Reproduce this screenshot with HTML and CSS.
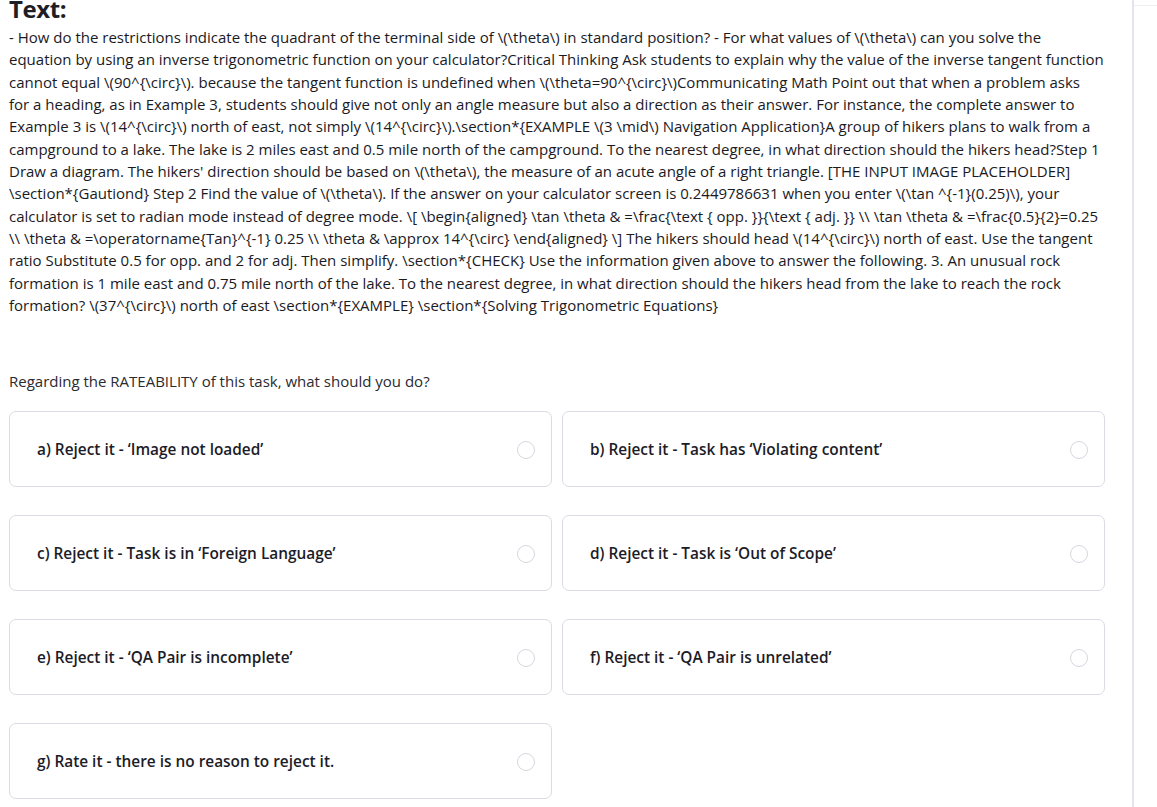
FILE: index.html
```html
<!DOCTYPE html>
<html lang="en">
<head>
<meta charset="utf-8">
<title>Rateability</title>
<link rel="stylesheet" href="styles.css">
</head>
<body>
<div class="layout">
  <main class="main">
    <h2 class="heading">Text:</h2>
    <p class="passage">- How do the restrictions indicate the quadrant of the terminal side of \(\theta\) in standard position? - For what values of \(\theta\) can you solve the equation by using an inverse trigonometric function on your calculator?Critical Thinking Ask students to explain why the value of the inverse tangent function cannot equal \(90^{\circ}\). because the tangent function is undefined when \(\theta=90^{\circ}\)Communicating Math Point out that when a problem asks for a heading, as in Example 3, students should give not only an angle measure but also a direction as their answer. For instance, the complete answer to Example 3 is \(14^{\circ}\) north of east, not simply \(14^{\circ}\).\section*{EXAMPLE \(3 \mid\) Navigation Application}A group of hikers plans to walk from a campground to a lake. The lake is 2 miles east and 0.5 mile north of the campground. To the nearest degree, in what direction should the hikers head?Step 1 Draw a diagram. The hikers' direction should be based on \(\theta\), the measure of an acute angle of a right triangle. [THE INPUT IMAGE PLACEHOLDER] \section*{Gautiond} Step 2 Find the value of \(\theta\). If the answer on your calculator screen is 0.2449786631 when you enter \(\tan ^{-1}(0.25)\), your calculator is set to radian mode instead of degree mode. \[ \begin{aligned} \tan \theta &amp; =\frac{\text { opp. }}{\text { adj. }} \\ \tan \theta &amp; =\frac{0.5}{2}=0.25 \\ \theta &amp; =\operatorname{Tan}^{-1} 0.25 \\ \theta &amp; \approx 14^{\circ} \end{aligned} \] The hikers should head \(14^{\circ}\) north of east. Use the tangent ratio Substitute 0.5 for opp. and 2 for adj. Then simplify. \section*{CHECK} Use the information given above to answer the following. 3. An unusual rock formation is 1 mile east and 0.75 mile north of the lake. To the nearest degree, in what direction should the hikers head from the lake to reach the rock formation? \(37^{\circ}\) north of east \section*{EXAMPLE} \section*{Solving Trigonometric Equations}</p>
    <p class="question">Regarding the RATEABILITY of this task, what should you do?</p>
    <div class="options">
      <label class="option"><span class="option-text">a) Reject it - ‘Image not loaded’</span><input type="radio" name="rate" class="radio"></label>
      <label class="option"><span class="option-text">b) Reject it - Task has ‘Violating content’</span><input type="radio" name="rate" class="radio"></label>
      <label class="option"><span class="option-text">c) Reject it - Task is in ‘Foreign Language’</span><input type="radio" name="rate" class="radio"></label>
      <label class="option"><span class="option-text">d) Reject it - Task is ‘Out of Scope’</span><input type="radio" name="rate" class="radio"></label>
      <label class="option"><span class="option-text">e) Reject it - ‘QA Pair is incomplete’</span><input type="radio" name="rate" class="radio"></label>
      <label class="option"><span class="option-text">f) Reject it - ‘QA Pair is unrelated’</span><input type="radio" name="rate" class="radio"></label>
      <label class="option"><span class="option-text">g) Rate it - there is no reason to reject it.</span><input type="radio" name="rate" class="radio"></label>
    </div>
  </main>
  <aside class="side"></aside>
</div>
</body>
</html>
```
FILE: styles.css
```css
html, body {
  margin: 0;
  padding: 0;
  background: #ffffff;
}
body {
  font-family: "Open Sans", "Noto Sans", sans-serif;
  color: #1f1f24;
  overflow: hidden;
}
.layout {
  display: flex;
  min-height: 807px;
}
.main {
  width: 1134px;
  flex: none;
  border-right: 2px solid #e6e3ee;
  padding: 0 28px 20px 9px;
  box-sizing: border-box;
}
.side {
  flex: 1;
  margin-top: 5px;
  border-top: 1px solid #f0f0f2;
}
.heading {
  margin: -3px 0 0 0;
  font-size: 24px;
  line-height: 24px;
  font-weight: 700;
  letter-spacing: -0.4px;
  font-family: "Open Sans", sans-serif;
  color: #1e1e24;
}
.passage {
  margin: 5px 0 0 0;
  font-size: 15px;
  line-height: 22.33px;
  color: #1a1a1f;
}
.question {
  margin: 54px 0 0 0;
  font-size: 15px;
  line-height: 22px;
  color: #2a2a30;
}
.options {
  margin-top: 19px;
  width: 1096px;
  display: grid;
  grid-template-columns: 1fr 1fr;
  column-gap: 10px;
  row-gap: 28px;
}
.option {
  height: 76px;
  box-sizing: border-box;
  border: 1px solid #dcdbe3;
  border-radius: 7px;
  display: flex;
  align-items: center;
  justify-content: space-between;
  padding: 1px 16px 0 27px;
  cursor: pointer;
}
.option-text {
  font-size: 15.4px;
  font-weight: 600;
  color: #1c1c28;
}
.radio {
  appearance: none;
  -webkit-appearance: none;
  margin: 0;
  width: 18px;
  height: 18px;
  border: 1px solid #d8d6e0;
  border-radius: 50%;
  background: #fff;
}
```
